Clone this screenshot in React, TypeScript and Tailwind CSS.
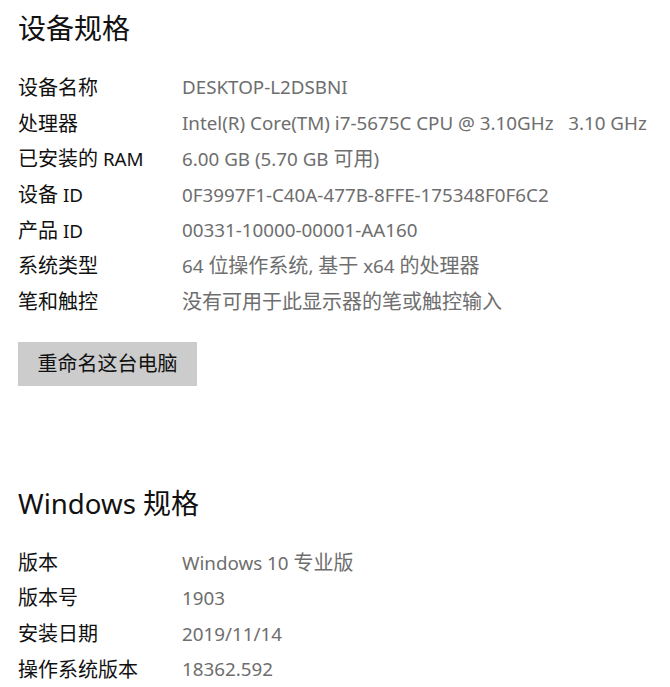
const FONT = "font-['Noto_Sans','Noto_Sans_CJK_SC',sans-serif]"

const deviceSpecs: [string, string][] = [
  ["设备名称", "DESKTOP-L2DSBNI"],
  ["处理器", "Intel(R) Core(TM) i7-5675C CPU @ 3.10GHz   3.10 GHz"],
  ["已安装的 RAM", "6.00 GB (5.70 GB 可用)"],
  ["设备 ID", "0F3997F1-C40A-477B-8FFE-175348F0F6C2"],
  ["产品 ID", "00331-10000-00001-AA160"],
  ["系统类型", "64 位操作系统, 基于 x64 的处理器"],
  ["笔和触控", "没有可用于此显示器的笔或触控输入"],
]

const windowsSpecs: [string, string][] = [
  ["版本", "Windows 10 专业版"],
  ["版本号", "1903"],
  ["安装日期", "2019/11/14"],
  ["操作系统版本", "18362.592"],
]

// Chinese runs are set a bit larger than the Latin ones, like YaHei next to Segoe UI
function Mixed({ text }: { text: string }) {
  const parts = text.split(/([\u3000-\u9fff\uff00-\uffef]+)/)
  return (
    <>
      {parts.map((p, i) =>
        i % 2 === 1 ? (
          <span key={i} className="text-[20px]">
            {p}
          </span>
        ) : (
          p
        )
      )}
    </>
  )
}

function SpecTable({ rows }: { rows: [string, string][] }) {
  return (
    <div className="mt-[22px]">
      {rows.map(([label, value]) => (
        <div key={label} className="flex h-[35.7px] items-center text-[18.8px] leading-none">
          <div className="w-[164px] shrink-0 text-[#111111]">
            <Mixed text={label} />
          </div>
          <div className="whitespace-pre text-[#6e6e6e]">
            <Mixed text={value} />
          </div>
        </div>
      ))}
    </div>
  )
}

export default function App() {
  return (
    <div className={`${FONT} min-h-[687px] w-[670px] bg-white pl-[18px] pt-[8px]`}>
      <h1 className="h-[40px] text-[28px] leading-[40px] text-[#111111]">设备规格</h1>
      <SpecTable rows={deviceSpecs} />

      <button className="mt-[22px] h-[44px] w-[179px] bg-[#cccccc] text-[20px] text-[#111111]">
        重命名这台电脑
      </button>

      <h1 className="mt-[97px] h-[40px] text-[28px] leading-[40px] text-[#111111]">
        <span className="text-[27.6px]">Windows </span>规格
      </h1>
      <SpecTable rows={windowsSpecs} />
    </div>
  )
}
